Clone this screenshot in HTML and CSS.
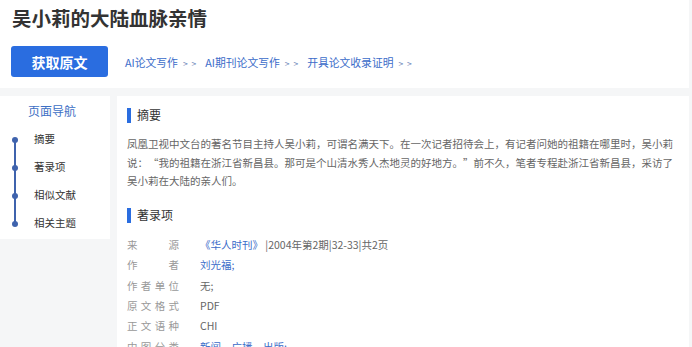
FILE: index.html
```html
<!DOCTYPE html>
<html lang="zh-CN">
<head>
<meta charset="utf-8" />
<meta name="viewport" content="width=device-width,initial-scale=1" />
<title>吴小莉的大陆血脉亲情</title>
<link rel="stylesheet" href="styles.css">
</head>
<body>
<div class="page">
  <header class="head">
    <h1>吴小莉的大陆血脉亲情</h1>
    <div class="tools">
      <a class="btn-get" href="#">获取原文</a>
      <a class="tool-link" href="#">AI论文写作<span class="arr">&gt; &gt;</span></a>
      <a class="tool-link" href="#">AI期刊论文写作<span class="arr">&gt; &gt;</span></a>
      <a class="tool-link" href="#">开具论文收录证明<span class="arr">&gt; &gt;</span></a>
    </div>
  </header>

  <div class="body">
    <nav class="side">
      <div class="side-title">页面导航</div>
      <ul class="steps">
        <li>摘要</li>
        <li>著录项</li>
        <li>相似文献</li>
        <li>相关主题</li>
      </ul>
    </nav>

    <main class="main">
      <h2 class="sec">摘要</h2>
      <p class="abs">凤凰卫视中文台的著名节目主持人吴小莉，可谓名满天下。在一次记者招待会上，有记者问她的祖籍在哪里时，吴小莉说：“我的祖籍在浙江省新昌县。那可是个山清水秀人杰地灵的好地方。”前不久，笔者专程赴浙江省新昌县，采访了吴小莉在大陆的亲人们。</p>

      <h2 class="sec sec2">著录项</h2>
      <dl class="info">
        <dt>来源</dt><dd><a href="#">《华人时刊》</a> |2004年第2期|32-33|共2页</dd>
        <dt>作者</dt><dd><a href="#">刘光福;</a></dd>
        <dt>作者单位</dt><dd>无;</dd>
        <dt>原文格式</dt><dd>PDF</dd>
        <dt>正文语种</dt><dd>CHI</dd>
        <dt>中图分类</dt><dd><a href="#">新闻</a>、<a href="#">广播</a>、<a href="#">出版;</a></dd>
      </dl>
    </main>
  </div>
</div>
</body>
</html>
```

FILE: styles.css
```css
body{margin:0;background:#f5f6f7;font-family:"Noto Sans CJK SC","Microsoft YaHei",sans-serif;color:#333;}
a{text-decoration:none;}
.page{width:689px;}
.head{background:#fff;padding:4px 11px 11px 12px;}
.head h1{margin:0;font-size:19.5px;line-height:28px;font-weight:700;color:#333;}
.tools{display:flex;align-items:center;margin-top:14px;}
.btn-get{display:flex;align-items:center;justify-content:center;width:97px;height:31px;margin-left:-1px;background:#2a6de0;border-radius:3px;color:#fff;font-size:14px;font-weight:700;}
.tool-link{margin-left:17px;font-size:10.8px;color:#3b6cc9;}
.tool-link + .tool-link{margin-left:8px;}
.tool-link .arr{margin-left:5px;color:#6d86b8;font-size:8.5px;letter-spacing:1px;}

.body{display:flex;gap:7px;padding-top:8px;align-items:flex-start;}
.side{width:110px;background:#fff;padding:1px 0 2px;}
.side-title{padding-left:28px;font-size:12px;line-height:28px;color:#3d6fc4;}
.steps{list-style:none;margin:0;padding:0;position:relative;}
.steps::before{content:"";position:absolute;left:14px;top:14px;bottom:14px;width:2px;background:#3f63ad;}
.steps li{position:relative;padding-left:34px;line-height:28px;font-size:10.5px;color:#333;}
.steps li::before{content:"";position:absolute;left:12px;top:12px;width:6px;height:6px;border-radius:50%;background:#3f63ad;}

.main{flex:1;background:#fff;padding:10px 12px 20px 10px;min-height:260px;}
.sec{display:flex;align-items:center;margin:0;font-size:12px;font-weight:400;line-height:18px;color:#333;}
.sec::before{content:"";width:4px;height:15px;margin-right:6px;background:#2a6de0;}
.sec2{margin-top:15px;}
.abs{margin:11px 0 0;font-size:10.5px;line-height:18.7px;color:#666;text-spacing-trim:space-all;}
.info{display:grid;grid-template-columns:73px 1fr;margin:11px 0 0;font-size:10.5px;line-height:20.3px;}
.info dt{width:52px;text-align:justify;text-align-last:justify;color:#999;}
.info dd{margin:0;color:#666;}
.info a{color:#3b6cc9;}
```
